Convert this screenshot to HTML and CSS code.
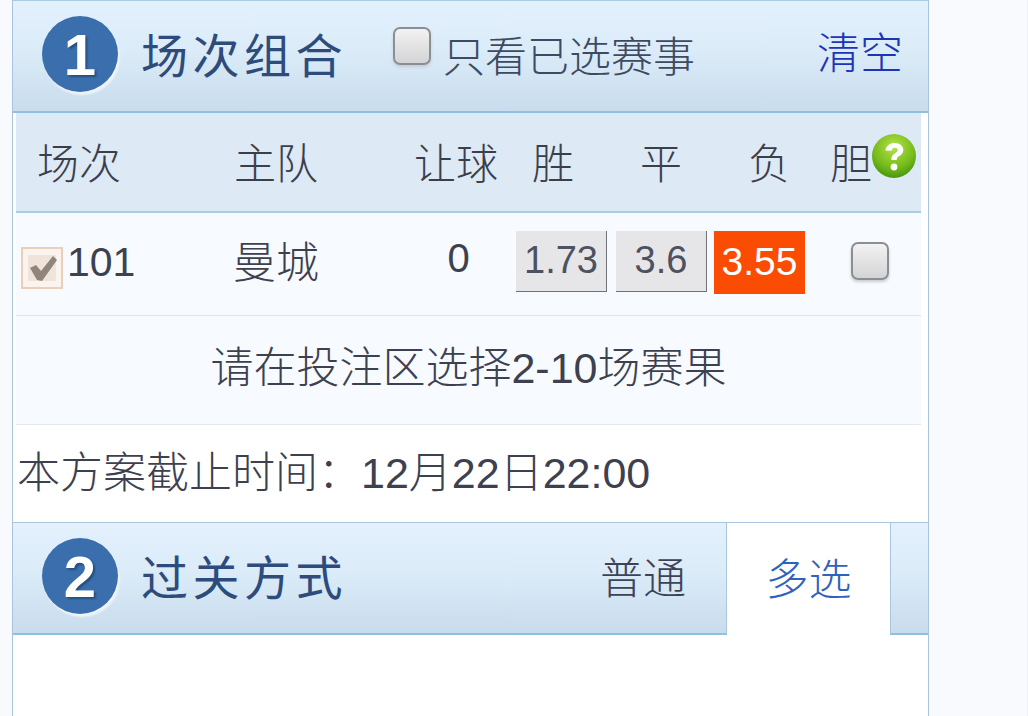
FILE: index.html
```html
<!DOCTYPE html>
<html lang="zh">
<head>
<meta charset="utf-8">
<title>场次组合</title>
<link rel="stylesheet" href="styles.css">
</head>
<body>
<main class="panel">
  <header class="bar">
    <span class="badge">1</span>
    <h2 class="title">场次组合</h2>
    <label class="only">
      <span class="box only-box"></span>
      <span>只看已选赛事</span>
    </label>
    <a class="clear">清空</a>
  </header>

  <section class="table">
    <div class="thead">
      <span class="th-first">场次</span>
      <span>主队</span>
      <span>让球</span>
      <span>胜</span>
      <span>平</span>
      <span>负</span>
      <span class="th-dan">胆
        <svg class="help" viewBox="0 0 46 46" aria-hidden="true">
          <defs>
            <radialGradient id="helpFill" cx="50%" cy="30%" r="75%">
              <stop offset="0" stop-color="#b4e24a"/>
              <stop offset="0.6" stop-color="#77bd1c"/>
              <stop offset="1" stop-color="#3f8f10"/>
            </radialGradient>
          </defs>
          <circle cx="23" cy="23" r="22" fill="url(#helpFill)"/>
          <path d="M14.5 17.5c.6-5 4.4-7.500 9-7.500 5.200 0 8.800 2.800 8.800 7 0 3-1.700 4.600-4 6-2 1.200-2.600 2-2.600 4h-5.400c0-3.500 1.100-5.200 3.700-6.800 1.700-1.100 2.700-1.800 2.700-3.100 0-1.400-1.100-2.300-2.800-2.300-1.800 0-3 1-3.400 3z" fill="#fff"/>
          <circle cx="23" cy="34" r="3.400" fill="#fff"/>
        </svg>
      </span>
    </div>

    <div class="match">
      <span class="num">
        <svg class="checked" viewBox="0 0 42 42" aria-hidden="true">
          <rect x="1" y="1" width="40" height="40" fill="#faf3ee" stroke="#eccfb9" stroke-width="2"/>
          <rect x="7" y="8" width="28" height="26" fill="#efe3da"/>
          <path d="M9 21l6-3 5 6L32 9l4 4-15 21-5-1z" fill="#8f857c"/>
        </svg>
        101
      </span>
      <span class="team">曼城</span>
      <span class="handicap">0</span>
      <span class="odd">1.73</span>
      <span class="odd">3.6</span>
      <span class="odd odd-on">3.55</span>
      <span class="dan"><span class="box"></span></span>
    </div>

    <p class="hint">请在投注区选择2-10场赛果</p>
  </section>

  <p class="deadline">本方案截止时间：12月22日22:00</p>

  <header class="bar tabbar">
    <div class="tab-main">
      <span class="badge">2</span>
      <h2 class="title">过关方式</h2>
      <span class="tab">普通</span>
    </div>
    <span class="tab-on">多选</span>
    <span class="tab-rest"></span>
  </header>
</main>
</body>
</html>
```
FILE: styles.css
```css
* { box-sizing: border-box; }
html, body { margin: 0; height: 716px; overflow: hidden; }
body {
  background: #f8fafd;
  font-family: "Liberation Sans", "Noto Sans CJK SC", sans-serif;
  font-size: 43px;
  font-weight: 300;
  color: #3d414f;
  border-right: 1px solid #eceff5;
}
.panel {
  width: 917px;
  height: 716px;
  margin-left: 12px;
  background: #fff;
  border-left: 1px solid #a9c2dd;
  border-right: 1px solid #a9c2dd;
  overflow: hidden;
}
.bar {
  display: flex;
  align-items: center;
  height: 113px;
  padding-left: 29px;
  background: linear-gradient(#e3f1fd, #dbebf8 45%, #c9dced);
  border-top: 1px solid #a9cbe3;
  border-bottom: 2px solid #8fc0dd;
}
.badge {
  flex: none;
  width: 76px;
  height: 76px;
  margin: 0 23px 4px 0;
  display: flex;
  align-items: center;
  justify-content: center;
  border-radius: 50%;
  background: #3a6ead;
  color: #fff;
  font-size: 58px;
  font-weight: 700;
  text-shadow: 2px 2px 2px #26507f;
  box-shadow: 2px 3px 2px #eef4fa;
}
.title {
  margin: 0;
  padding-bottom: 8px;
  font-size: 47px;
  font-weight: 400;
  letter-spacing: 4.5px;
  color: #2d4c7c;
}
.only {
  display: flex;
  align-items: center;
  margin-left: 46px;
  padding-bottom: 6px;
  font-size: 42px;
  color: #3d4a62;
}
.box {
  display: block;
  width: 38px;
  height: 38px;
  border: 2px solid #8b8f94;
  border-radius: 7px;
  background: linear-gradient(#f2f2f2, #d4d4d6);
  box-shadow: 0 2px 3px #c5ccd3;
}
.only-box { margin: -14px 12px 0 0; }
.clear {
  margin-left: auto;
  margin-right: 25px;
  padding-bottom: 12px;
  color: #1c34b8;
}
.table {
  margin: 0 7px 0 3px;
  background: #f7fafe;
}
.thead {
  display: grid;
  grid-template-columns: 126px 268px 92px 102px 114px 102px 101px;
  align-items: center;
  height: 100px;
  padding-bottom: 4px;
  background: #dde9f5;
  border-bottom: 2px solid #a6d0e6;
  text-align: center;
  font-size: 42px;
  color: #3b3f4b;
}
.th-first { text-align: left; padding-left: 21px; }
.th-dan {
  display: flex;
  align-items: center;
  padding-left: 10px;
}
.help {
  flex: none;
  width: 46px;
  height: 46px;
  margin: -8px 0 0 -1px;
}
.match {
  display: grid;
  grid-template-columns: 151px 218px 131px 100px 98px 91px 116px;
  grid-template-rows: 1fr;
  align-items: center;
  height: 103px;
  padding-bottom: 6px;
  border-bottom: 1px solid #dfe6ec;
  text-align: center;
}
.num {
  display: flex;
  align-items: center;
  gap: 4px;
  padding: 2px 0 0 5px;
  font-size: 41px;
}
.checked { width: 42px; height: 42px; flex: none; margin-top: 12px; }
.team { padding-bottom: 4px; }
.handicap { font-size: 40px; margin-left: 16px; padding-bottom: 6px; }
.odd {
  width: 91px;
  height: 61px;
  line-height: 58px;
  font-size: 38px;
  background: #e6e6e8;
  border-right: 1px solid #6f7278;
  border-bottom: 1px solid #6f7278;
  color: #4d5260;
}
.odd-on {
  height: 63px;
  margin-bottom: -2px;
  line-height: 62px;
  font-size: 39px;
  background: #fb4c03;
  border: 0;
  color: #fff;
  font-weight: 400;
}
.dan { display: flex; justify-content: center; padding-left: 14px; }
.hint {
  margin: 0;
  height: 109px;
  line-height: 104px;
  text-align: center;
  border-bottom: 1px solid #e4e9ee;
}
.deadline {
  margin: 0;
  height: 97px;
  padding-left: 4px;
  line-height: 96px;
  white-space: nowrap;
}
.tabbar {
  padding: 0;
  background: none;
  border: 0;
  align-items: stretch;
  height: 113px;
}
.tab-main, .tab-rest {
  display: flex;
  align-items: center;
  background: linear-gradient(#e3f1fd, #dbebf8 45%, #c9dced);
  border-top: 1px solid #a9c6e0;
  border-bottom: 2px solid #8fc0dd;
}
.tab-main {
  width: 714px;
  padding-left: 29px;
  border-right: 1px solid #a9c6e0;
}
.tab { margin-left: auto; margin-right: 40px; padding-bottom: 6px; color: #3d4357; }
.tab-on {
  width: 163px;
  padding-bottom: 6px;
  display: flex;
  align-items: center;
  justify-content: center;
  border-top: 1px solid #a9c6e0;
  color: #2e62c0;
}
.tab-rest {
  flex: 1;
  border-left: 1px solid #a9c6e0;
}
```
